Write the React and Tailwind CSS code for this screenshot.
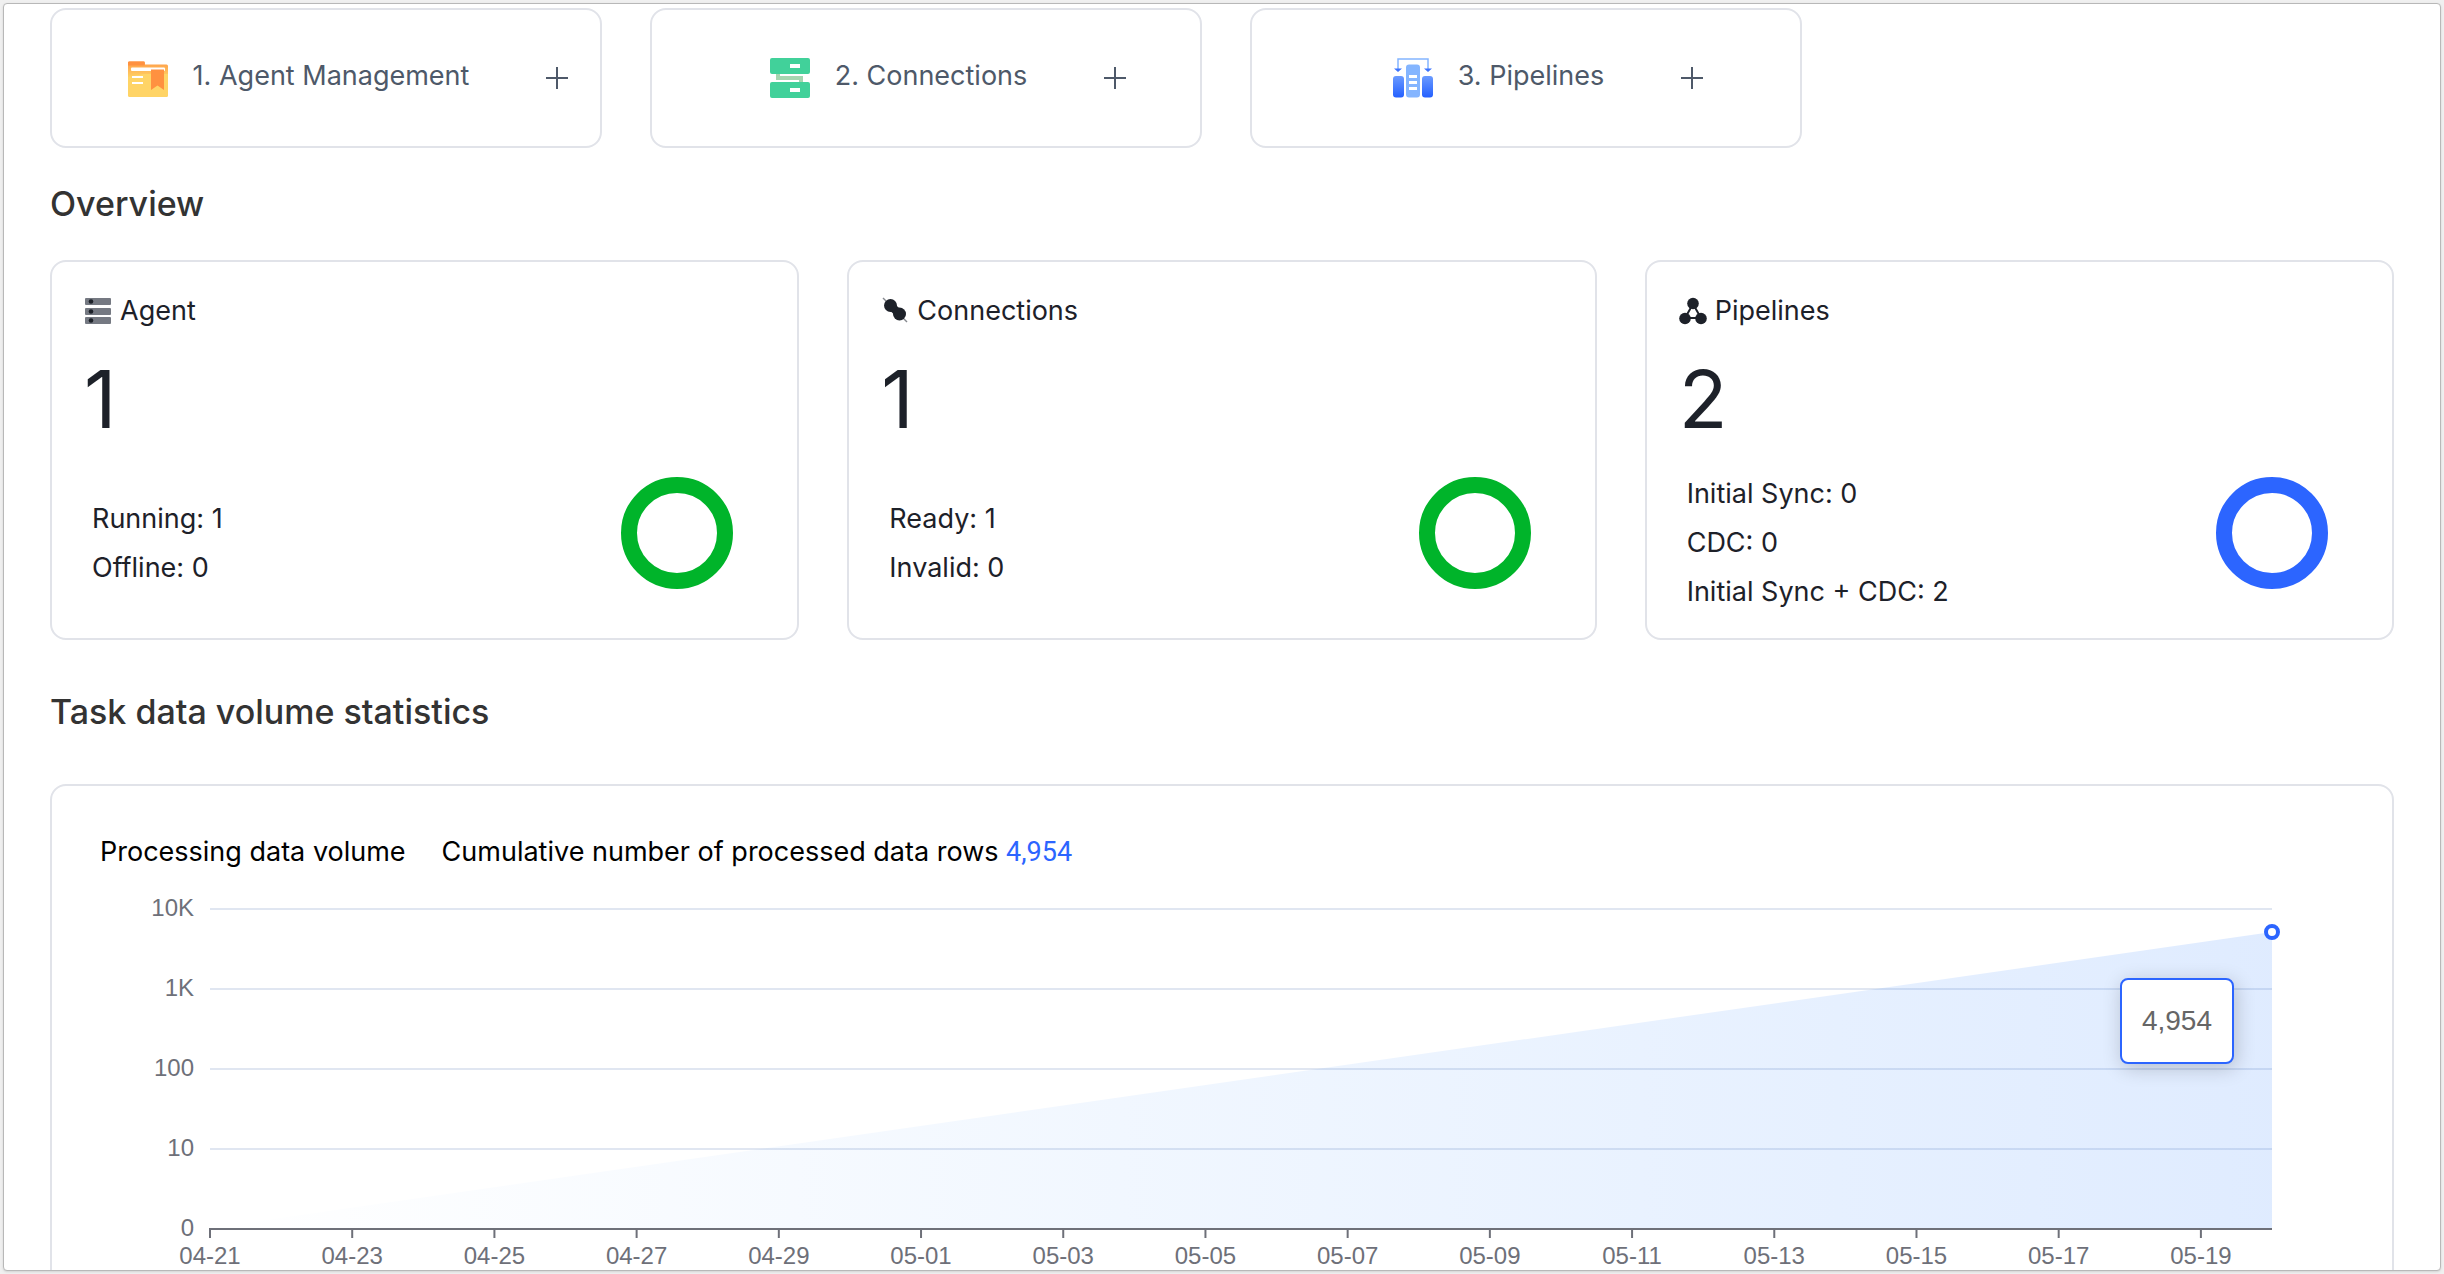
import { useId } from "react";

const STROKE = "#4e5969";

function FolderIcon() {
  return (
    <svg viewBox="0 1 42 42" className="size-[42px]" aria-hidden="true">
      <defs>
        <linearGradient id="folder-back" x1="0" y1="0" x2="0" y2="1">
          <stop offset="0" stopColor="#ff9a45" />
          <stop offset="0.400" stopColor="#ffb455" />
          <stop offset="0.900" stopColor="#ffd466" />
        </linearGradient>
      </defs>
      <path d="M1 7a1.500 1.500 0 0 1 1.500-1.500H16.500a1.500 1.500 0 0 1 1.500 1.500V8.500H39.500A1.500 1.500 0 0 1 41 10V24H1z" fill="url(#folder-back)" />
      <path d="M1 6.500a1 1 0 0 1 1-1H17.500V9.500H1z" fill="#ff9140" />
      <rect x="4" y="11.500" width="34" height="3.500" rx="1" fill="#fff" />
      <path d="M1 21l16-3h24v21.500a1.500 1.500 0 0 1-1.500 1.500H2.500a1.500 1.500 0 0 1-1.500-1.500z" fill="#ffd466" />
      <path d="M24 13.500h13V34l-6.500-4.500L24 34z" fill="#ff9140" />
      <path d="M5 21h11M5 27h11" stroke="#fff" strokeWidth="2" />
    </svg>
  );
}

function ServersIcon() {
  return (
    <svg viewBox="0 0 42 42" className="size-[42px]" aria-hidden="true">
      <path d="M9 16v5h23v5" fill="none" stroke="#a5d6b0" strokeWidth="4" />
      <rect x="1" y="1" width="40" height="16" rx="2" fill="#41d19a" />
      <rect x="1" y="25" width="40" height="16" rx="2" fill="#41d19a" />
      <rect x="21" y="7" width="10" height="4" fill="#fff" />
      <rect x="21" y="31" width="10" height="4" fill="#fff" />
    </svg>
  );
}

function PipelineIcon() {
  return (
    <svg viewBox="0 0 42 42" className="size-[42px]" aria-hidden="true">
      <defs>
        <linearGradient id="pipe-side" x1="0" y1="0" x2="0" y2="1">
          <stop offset="0" stopColor="#6b9bff" />
          <stop offset="1" stopColor="#2460ff" />
        </linearGradient>
      </defs>
      <path d="M6 13V2h30v11" fill="none" stroke="#84b5ff" strokeWidth="1.500" />
      <path d="M2 11.500h8L6 15zM32 11.500h8L36 15z" fill="#3b73ff" />
      <rect x="14" y="7.500" width="14" height="33" rx="3" fill="#84b5ff" />
      <path d="M17 19.500h8M17 25.500h8M17 31.500h8" stroke="#fff" strokeWidth="3" />
      <rect x="1" y="19" width="11" height="21.500" rx="3" fill="url(#pipe-side)" />
      <rect x="30" y="19" width="11" height="21.500" rx="3" fill="url(#pipe-side)" />
    </svg>
  );
}

function PlusIcon() {
  return (
    <svg viewBox="0 0 24 24" className="size-6" aria-hidden="true">
      <path d="M12 1v22M1 12h22" stroke={STROKE} strokeWidth="2" />
    </svg>
  );
}

function AgentMini() {
  return (
    <svg viewBox="0 0 28 28" className="size-7" aria-hidden="true">
      {[1, 11, 20].map((y) => (
        <g key={y}>
          <rect x="1" y={y} width="26" height="7" rx="1" fill="#757982" />
          <circle cx="7" cy={y + 3.5} r="2.300" fill="#1d2129" />
        </g>
      ))}
    </svg>
  );
}

function ConnectionMini() {
  return (
    <svg viewBox="0 0 28 28" className="size-7" aria-hidden="true">
      <path d="M2 1l24 24" stroke="#86898f" strokeWidth="1.500" />
      <path d="M9.500 8.500l9 8.500" stroke="#1d2129" strokeWidth="8" />
      <circle cx="9.500" cy="8.500" r="6.500" fill="#1d2129" />
      <circle cx="18.500" cy="17" r="6.500" fill="#1d2129" />
    </svg>
  );
}

function PipelineMini() {
  return (
    <svg viewBox="0 0 28 28" className="size-7" aria-hidden="true">
      <path d="M14 7l8 14H6z" fill="none" stroke="#1d2129" strokeWidth="2" />
      <circle cx="14" cy="6.500" r="5.800" fill="#1d2129" />
      <circle cx="6" cy="21.500" r="5.800" fill="#1d2129" />
      <circle cx="22" cy="21.500" r="5.800" fill="#1d2129" />
    </svg>
  );
}

const STEPS = [
  { label: "1. Agent Management", Icon: FolderIcon },
  { label: "2. Connections", Icon: ServersIcon },
  { label: "3. Pipelines", Icon: PipelineIcon },
];

const CARDS = [
  { title: "Agent", Icon: AgentMini, total: 1, color: "#00b42a", rows: ["Running: 1", "Offline: 0"] },
  { title: "Connections", Icon: ConnectionMini, total: 1, color: "#00b42a", rows: ["Ready: 1", "Invalid: 0"] },
  {
    title: "Pipelines",
    Icon: PipelineMini,
    total: 2,
    color: "#2c65ff",
    rows: ["Initial Sync: 0", "CDC: 0", "Initial Sync + CDC: 2"],
  },
];

const Y_LABELS = ["10K", "1K", "100", "10", "0"];
const X_LABELS = [
  "04-21", "04-23", "04-25", "04-27", "04-29", "05-01", "05-03", "05-05",
  "05-07", "05-09", "05-11", "05-13", "05-15", "05-17", "05-19",
];
const DAYS = 29;
const PLOT_HEIGHT = 320;
const POINT_Y = 24;

function VolumeChart() {
  const fill = useId();
  return (
    <div className="relative mr-[120px] ml-[158px] h-[380px]">
      <svg
        className="block h-full w-full overflow-visible font-['Liberation_Sans',Arial,sans-serif] text-2xl"
        role="img"
        aria-label="Processed rows per day"
      >
        <defs>
          <linearGradient id={fill} x1="0" x2="1" y1="0" y2="0">
            <stop offset="0" stopColor="#2c8dff" stopOpacity="0" />
            <stop offset="1" stopColor="#2c7dff" stopOpacity="0.150" />
          </linearGradient>
        </defs>
        {Y_LABELS.map((label, i) => (
          <g key={label}>
            {i < 4 && <line x1="0" x2="100%" y1={i * 80 + 1} y2={i * 80 + 1} stroke="#e0e6f1" strokeWidth="2" />}
            <text x="-16" y={i * 80 + 8} textAnchor="end" fill="#6e7079">
              {label}
            </text>
          </g>
        ))}
        <svg x="0" y="0" width="100%" height={PLOT_HEIGHT} viewBox="0 0 100 320" preserveAspectRatio="none">
          <path d={`M0 320L100 ${POINT_Y}V320z`} fill={`url(#${fill})`} />
        </svg>
        <line x1="0" x2="100%" y1="321" y2="321" stroke="#6e7079" strokeWidth="2" />
        {X_LABELS.map((label, i) => {
          const x = `${(i * 200) / DAYS}%`;
          return (
            <g key={label}>
              <line x1={x} x2={x} y1="320" y2="330" stroke="#6e7079" strokeWidth="2" />
              <text x={x} y="356" textAnchor="middle" fill="#6e7079">
                {label}
              </text>
            </g>
          );
        })}
        <circle cx="100%" cy={POINT_Y} r="6" fill="#fff" stroke="#2c65ff" strokeWidth="4" />
      </svg>
      <div className="absolute top-[70px] right-[38px] rounded-lg border-2 border-[#2c65ff] bg-white px-5 py-5 font-['Liberation_Sans',Arial,sans-serif] text-[28px] leading-[42px] text-[#666666] shadow-[2px_4px_20px_rgba(0,0,0,0.2)]">
        4,954
      </div>
    </div>
  );
}

export default function App() {
  return (
    <div className="h-screen overflow-hidden bg-[#f0f0f0] p-[3px] font-[Inter,'Liberation_Sans',sans-serif]">
      <main className="h-full overflow-hidden rounded-sm border border-[#b8b8b8] bg-white px-[46px] pt-1 shadow-sm">
        <nav className="grid grid-cols-[repeat(3,552px)] gap-12">
          {STEPS.map(({ label, Icon }) => (
            <button
              key={label}
              type="button"
              className="flex h-[140px] items-center justify-center rounded-2xl border-2 border-[#e1e3e9] pl-11 text-[27px] leading-10 text-[#4e5969]"
            >
              <Icon />
              <span className="mr-[76px] ml-6 pb-1">{label}</span>
              <PlusIcon />
            </button>
          ))}
        </nav>

        <h2 className="mt-8 text-[34px] leading-12 font-medium text-[#333333]">Overview</h2>
        <section className="mt-8 grid grid-cols-3 gap-12">
          {CARDS.map(({ title, Icon, total, color, rows }) => (
            <article key={title} className="h-[380px] rounded-2xl border-2 border-[#e1e3e9] px-8 pt-[29px] text-[#1d2129]">
              <h3 className="flex items-center gap-2 text-[27px] leading-10">
                <Icon />
                {title}
              </h3>
              <p className="mt-7 text-[80px] leading-[80px]">{total}</p>
              <div className="mt-2.5 flex h-[167px] items-center justify-between pr-8 pl-2">
                <ul className="pt-5 text-[27px] leading-[49px]">
                  {rows.map((row) => (
                    <li key={row}>{row}</li>
                  ))}
                </ul>
                <svg viewBox="0 0 112 112" className="size-28" aria-hidden="true">
                  <circle cx="56" cy="56" r="48" fill="none" stroke={color} strokeWidth="16" />
                </svg>
              </div>
            </article>
          ))}
        </section>

        <h2 className="mt-12 text-[34px] leading-12 font-medium text-[#333333]">Task data volume statistics</h2>
        <section className="mt-12 rounded-2xl border-2 border-[#e1e3e9] pt-[46px]">
          <div className="flex gap-9 px-12 text-[27px] leading-10 text-black">
            <span>Processing data volume</span>
            <span>
              Cumulative number of processed data rows{" "}
              <span className="font-[Roboto,sans-serif] text-[#2c65ff]">4,954</span>
            </span>
          </div>
          <div className="mt-9">
            <VolumeChart />
          </div>
        </section>
      </main>
    </div>
  );
}
